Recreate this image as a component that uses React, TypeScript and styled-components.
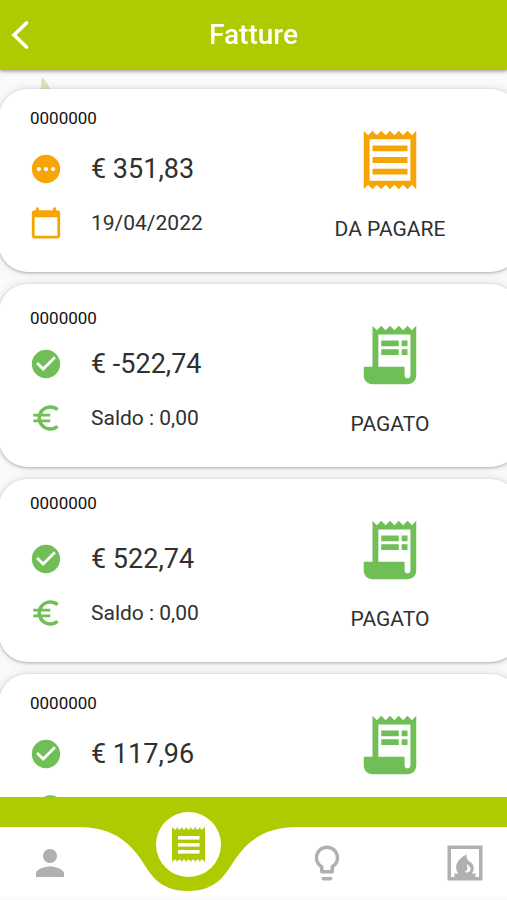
import React from "react";
import styled, { createGlobalStyle } from "styled-components";
import {
  MdCalendarToday,
  MdCheckCircle,
  MdEuroSymbol,
  MdFireplace,
  MdLightbulbOutline,
  MdOutlineReceipt,
  MdPending,
  MdPerson,
  MdReceiptLong,
} from "react-icons/md";

const lime = "#afca00";
const orange = "#f5a506";
const green = "#6fbe56";

const GlobalStyle = createGlobalStyle`
  * { box-sizing: border-box; }
  body {
    margin: 0;
    font-family: Roboto, "Liberation Sans", sans-serif;
    color: #303030;
    background: #fafafa;
  }
`;

const Screen = styled.div`
  display: flex;
  flex-direction: column;
  height: 100vh;
  overflow: hidden;
`;

const TopBar = styled.header`
  display: grid;
  grid-template-columns: 48px 1fr 48px;
  align-items: center;
  flex: none;
  height: 70px;
  background: ${lime};
  box-shadow: 0 1px 4px rgba(0, 0, 0, 0.45);
  position: relative;
  z-index: 1;
`;

const BackButton = styled.button`
  display: flex;
  align-items: center;
  padding: 0 10px;
  height: 48px;
  border: 0;
  background: none;
  color: #fff;
  cursor: pointer;
`;

const Title = styled.h1`
  margin: 0;
  font-size: 28px;
  line-height: 36px;
  font-weight: 500;
  text-align: center;
  color: #fff;
`;

const Content = styled.main`
  position: relative;
  flex: 1;
  min-height: 0;
  overflow-x: hidden;
  overflow-y: auto;
  scrollbar-width: none;
  background: #fafafa;
`;

const Leaf = styled.svg`
  position: absolute;
  left: 40px;
  top: 7px;
`;

const InvoiceList = styled.ul`
  position: relative;
  display: flex;
  flex-direction: column;
  gap: 12px;
  margin: 0 -12px 0 -1px;
  padding: 19px 0 24px;
  list-style: none;
`;

const Card = styled.li`
  display: grid;
  grid-template-columns: 1fr 1fr;
  padding: 0 0 0 4px;
  border-radius: 28px;
  background: #fff;
  box-shadow: 0 1px 3px rgba(0, 0, 0, 0.26), 0 0 10px rgba(0, 0, 0, 0.12);
`;

const Details = styled.div`
  display: flex;
  flex-direction: column;
  gap: 20px;
  padding: 15px 0 32px 26px;
`;

type Align = "start" | "center" | "end";

const InvoiceId = styled.div<{ $align: Align }>`
  display: flex;
  align-items: ${(p) => p.$align};
  height: 28px;
  padding-left: 1px;
  font-size: 17px;
  line-height: 18px;
  color: #111;
`;

const DetailRow = styled.div<{ $color: string }>`
  display: flex;
  align-items: center;
  gap: 28px;
  height: 34px;

  svg {
    flex: none;
    color: ${(p) => p.$color};
  }
`;

const Amount = styled.span`
  font-size: 27px;
  line-height: 34px;
  white-space: nowrap;
`;

const Note = styled.span`
  font-size: 21px;
  line-height: 34px;
  white-space: nowrap;
`;

const Status = styled.div<{ $color: string }>`
  display: flex;
  flex-direction: column;
  align-items: center;
  gap: 22px;
  padding-top: 36px;
  font-size: 21px;
  line-height: 24px;

  svg {
    color: ${(p) => p.$color};
  }
`;

const Footer = styled.footer`
  flex: none;
  position: relative;
  padding-top: 30px;
  background: ${lime};
`;

const Nav = styled.nav`
  display: flex;
  justify-content: space-between;
  align-items: flex-start;
  height: 73px;
  padding: 0 9px 0 17px;
  background: #fff;
  border-bottom: 3px solid #fafafa;
`;

const NavButton = styled.button`
  display: flex;
  justify-content: center;
  width: 66px;
  padding: 15px 0 0;
  border: 0;
  background: none;
  color: #b0b0b0;
  cursor: pointer;
`;

const ActiveSlot = styled.div`
  position: relative;
  width: 66px;
`;

const Bump = styled.svg`
  position: absolute;
  top: -1px;
  left: 50%;
  margin-left: -110px;
`;

const ActiveButton = styled.button`
  position: relative;
  display: flex;
  align-items: center;
  justify-content: center;
  width: 65px;
  height: 65px;
  margin: -15px 0 0 auto;
  padding: 0;
  border: 0;
  border-radius: 50%;
  background: #fff;
  color: ${lime};
  cursor: pointer;
`;

const notches = [4, 8.5, 13, 17.5, 22, 26.5, 31];

function TicketIcon() {
  return (
    <svg width="35" height="35" viewBox="0 0 35 35" aria-hidden="true">
      <rect x="1" y="0.5" width="33" height="34" fill="currentColor" />
      <g fill="#fff">
        {notches.map((x) => (
          <React.Fragment key={x}>
            <circle cx={x} cy="0.9" r="1.6" />
            <circle cx={x} cy="34.1" r="1.6" />
          </React.Fragment>
        ))}
        <rect x="7" y="9" width="21.5" height="3.6" />
        <rect x="7" y="16" width="21.5" height="3.6" />
        <rect x="7" y="23" width="21.5" height="3.6" />
      </g>
    </svg>
  );
}

interface Invoice {
  id: string;
  align: Align;
  amount: string;
  note: string;
  paid: boolean;
}

const invoices: Invoice[] = [
  { id: "0000000", align: "center", amount: "€ 351,83", note: "19/04/2022", paid: false },
  { id: "0000000", align: "end", amount: "€ -522,74", note: "Saldo : 0,00", paid: true },
  { id: "0000000", align: "start", amount: "€ 522,74", note: "Saldo : 0,00", paid: true },
  { id: "0000000", align: "center", amount: "€ 117,96", note: "Saldo : 0,00", paid: true },
];

function InvoiceCard({ invoice }: { invoice: Invoice }) {
  const { id, align, amount, note, paid } = invoice;
  const color = paid ? green : orange;
  return (
    <Card>
      <Details>
        <InvoiceId $align={align}>{id}</InvoiceId>
        <DetailRow $color={color}>
          {paid ? <MdCheckCircle size={34} /> : <MdPending size={34} />}
          <Amount>{amount}</Amount>
        </DetailRow>
        <DetailRow $color={color}>
          {paid ? <MdEuroSymbol size={34} /> : <MdCalendarToday size={34} />}
          <Note>{note}</Note>
        </DetailRow>
      </Details>
      <Status $color={color}>
        {paid ? <MdReceiptLong size={70} /> : <MdOutlineReceipt size={70} />}
        <span>{paid ? "PAGATO" : "DA PAGARE"}</span>
      </Status>
    </Card>
  );
}

export default function App() {
  return (
    <Screen>
      <GlobalStyle />
      <TopBar>
        <BackButton type="button" aria-label="Indietro">
          <svg width="20" height="30" viewBox="0 0 20 30" fill="none" aria-hidden="true">
            <path d="M16.5 3L4 15L16.5 27" stroke="currentColor" strokeWidth="3.6" strokeLinecap="round" />
          </svg>
        </BackButton>
        <Title>Fatture</Title>
      </TopBar>
      <Content>
        <Leaf width="12" height="24" viewBox="0 0 12 24" aria-hidden="true">
          <path d="M1.5 0C5 3 9 8 10.5 14V24H0.5C0.5 16 1 8 1.5 0Z" fill="#dbe3bd" />
        </Leaf>
        <InvoiceList>
          {invoices.map((invoice, index) => (
            <InvoiceCard key={index} invoice={invoice} />
          ))}
        </InvoiceList>
      </Content>
      <Footer>
        <Nav aria-label="Principale">
          <NavButton type="button" aria-label="Profilo">
            <MdPerson size={42} />
          </NavButton>
          <ActiveSlot>
            <Bump width="220" height="66" viewBox="0 0 220 66" aria-hidden="true">
              <path
                d="M0 0V1C30 1 48 12 62 32C72 47 80 65 110 65C140 65 148 47 158 32C172 12 190 1 220 1V0Z"
                fill={lime}
              />
            </Bump>
            <ActiveButton type="button" aria-label="Fatture" aria-current="page">
              <TicketIcon />
            </ActiveButton>
          </ActiveSlot>
          <NavButton type="button" aria-label="Luce">
            <MdLightbulbOutline size={42} />
          </NavButton>
          <NavButton type="button" aria-label="Gas">
            <MdFireplace size={42} />
          </NavButton>
        </Nav>
      </Footer>
    </Screen>
  );
}
